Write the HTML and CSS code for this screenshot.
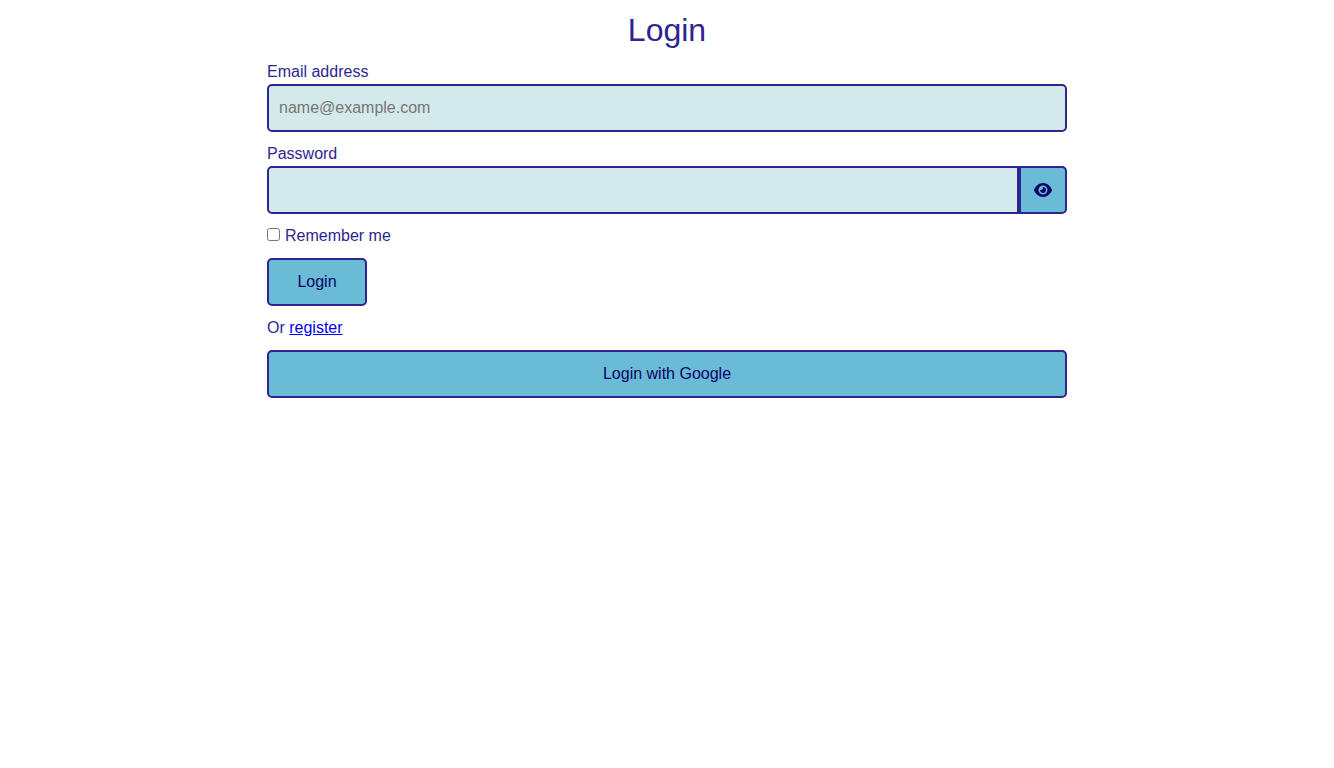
FILE: index.html
```html
<!DOCTYPE html>
<html lang="en">
<head>
<meta charset="utf-8">
<meta name="viewport" content="width=device-width, initial-scale=1">
<title>Login</title>
<link rel="stylesheet" href="styles.css">
</head>
<body>
<main class="page">
  <h1 class="title">Login</h1>
  <form class="form">
    <div class="field">
      <label for="email">Email address</label>
      <input class="input" id="email" type="email" placeholder="name@example.com">
    </div>
    <div class="field">
      <label for="password">Password</label>
      <div class="input-group">
        <input class="input" id="password" type="password">
        <button class="button button-icon" type="button" aria-label="Show password">
          <svg class="icon" viewBox="0 0 576 512" aria-hidden="true"><path fill="currentColor" d="M288 32c-80.8 0-145.5 36.8-192.6 80.6C48.6 156 17.3 208 2.5 243.7c-3.3 7.9-3.3 16.7 0 24.6C17.3 304 48.6 356 95.4 399.4C142.5 443.2 207.2 480 288 480s145.5-36.8 192.6-80.6c46.8-43.5 78.1-95.4 93-131.1c3.3-7.9 3.3-16.7 0-24.6c-14.9-35.7-46.2-87.7-93-131.1C433.5 68.8 368.8 32 288 32zM144 256a144 144 0 1 1 288 0 144 144 0 1 1 -288 0zm144-64c0 35.3-28.7 64-64 64c-7.1 0-13.9-1.2-20.3-3.3c-5.5-1.8-11.9 1.6-11.7 7.4c.3 6.9 1.3 13.8 3.2 20.7c13.7 51.2 66.4 81.6 117.6 67.9s81.6-66.4 67.9-117.6c-11.1-41.5-47.8-69.4-88.6-71.1c-5.8-.2-9.2 6.1-7.4 11.7c2.1 6.4 3.3 13.2 3.3 20.3z"/></svg>
        </button>
      </div>
    </div>
    <div class="check">
      <input class="checkbox" id="remember" type="checkbox">
      <label for="remember">Remember me</label>
    </div>
    <button class="button button-submit" type="submit">Login</button>
  </form>
  <p class="note">Or <a href="#register">register</a></p>
  <button class="button" type="button">Login with Google</button>
</main>
</body>
</html>
```
FILE: styles.css
```css
:root {
  --ink: #2e2590;
  --ink-dark: #0b0466;
  --accent: #69bbd6;
  --field: #d4e9e9;
}

* {
  box-sizing: border-box;
}

body {
  margin: 0;
  background: #fff;
  color: var(--ink);
  font: 16px/24px "Liberation Sans", Arial, sans-serif;
}

.page {
  display: flex;
  flex-direction: column;
  gap: 10px;
  max-width: 820px;
  margin: 0 auto;
  padding: 10px;
}

.title {
  margin: 0;
  font-size: 32px;
  font-weight: 400;
  line-height: 40px;
  text-align: center;
}

.form {
  display: flex;
  flex-direction: column;
  gap: 10px;
}

.field {
  display: flex;
  flex-direction: column;
}

.input,
.button {
  height: 48px;
  border: 2px solid var(--ink);
  border-radius: 5px;
  font: inherit;
}

.input {
  width: 100%;
  padding: 10px;
  background: var(--field);
  color: var(--ink-dark);
}

.button {
  padding: 10px;
  background: var(--accent);
  color: var(--ink-dark);
  cursor: pointer;
}

.input-group {
  display: flex;
}

.input-group .input {
  flex: 1;
  min-width: 0;
  border-radius: 5px 0 0 5px;
}

.button-icon {
  display: flex;
  align-items: center;
  justify-content: center;
  width: 48px;
  border-radius: 0 5px 5px 0;
}

.icon {
  width: 18px;
  height: 16px;
}

.check {
  display: flex;
  gap: 5px;
}

.checkbox {
  width: 13px;
  height: 13px;
  margin: 4px 0;
}

.button-submit {
  align-self: flex-start;
  width: 100px;
}

.note {
  margin: 0;
}

.note a {
  color: #0000ee;
}
```
